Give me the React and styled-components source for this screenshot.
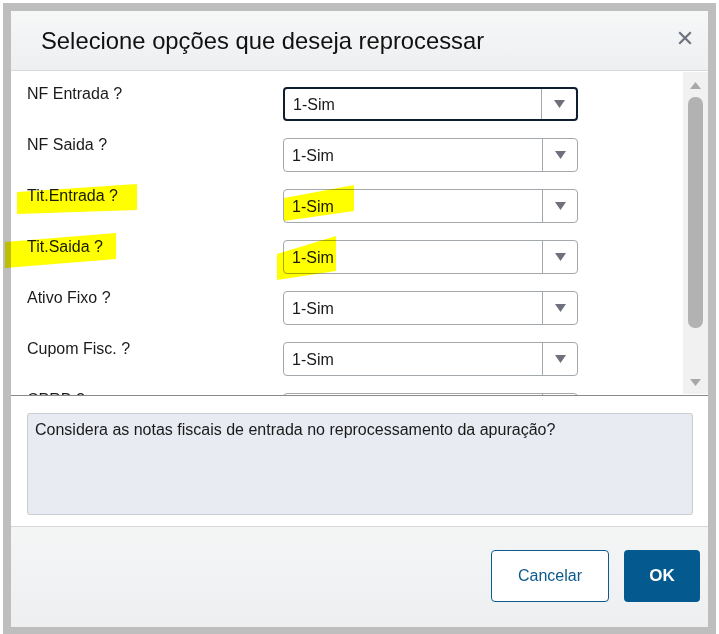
import React from "react";
import styled, { createGlobalStyle } from "styled-components";

const GlobalStyle = createGlobalStyle`
  html, body {
    margin: 0;
    padding: 0;
    background: #ffffff;
    overflow: hidden;
  }
  body {
    font-family: "Liberation Sans", Arial, sans-serif;
    color: #1a1a1a;
  }
`;

const options = [
  { label: "NF Entrada ?", value: "1-Sim", focused: true },
  { label: "NF Saida ?", value: "1-Sim" },
  {
    label: "Tit.Entrada ?",
    value: "1-Sim",
    labelMark: { left: -10, top: -2, w: 120, h: 30, pts: "0 8, 120 0, 120 26, 0 30" },
    valueMark: { left: 0, top: -5, w: 70, h: 36, pts: "0 13, 70 0, 70 26, 0 36" },
  },
  {
    label: "Tit.Saida ?",
    value: "1-Sim",
    labelMark: { left: -22, top: -4, w: 111, h: 35, pts: "0 9, 111 0, 111 26, 0 35" },
    valueMark: { left: -7, top: -5, w: 59, h: 44, pts: "0 18, 59 0, 59 35, 0 44" },
  },
  { label: "Ativo Fixo ?", value: "1-Sim" },
  { label: "Cupom Fisc. ?", value: "1-Sim" },
  { label: "CPRB ?", value: "1-Sim" },
];

// turns "x y, x y" into a clip-path polygon list in px
const toPolygon = (pts) =>
  pts
    .split(",")
    .map((pt) =>
      pt
        .trim()
        .split(" ")
        .map((n) => `${n}px`)
        .join(" ")
    )
    .join(", ");

export default function App() {
  return (
    <>
      <GlobalStyle />
      <Frame>
        <Dialog>
          <Header>
            <Title>Selecione opções que deseja reprocessar</Title>
            <CloseButton aria-label="Fechar">
              <svg width="14" height="14" viewBox="0 0 14 14">
                <path d="M2 2 L12 12 M12 2 L2 12" stroke="#6f737d" strokeWidth="2.2" strokeLinecap="square" />
              </svg>
            </CloseButton>
          </Header>

          <Body>
            <List>
              {options.map((opt) => (
                <Row key={opt.label}>
                  <Label>
                    {opt.labelMark && <Mark $m={opt.labelMark} />}
                    {opt.label}
                  </Label>
                  <Select $focused={opt.focused}>
                    {opt.valueMark && <Mark $m={opt.valueMark} />}
                    <Value>{opt.value}</Value>
                    <ArrowBox>
                      <svg width="11" height="8" viewBox="0 0 11 8">
                        <path d="M0 0 L11 0 L5.5 8 Z" fill="#6e717c" />
                      </svg>
                    </ArrowBox>
                  </Select>
                </Row>
              ))}
            </List>
            <ScrollTrack>
              <svg width="11" height="7" viewBox="0 0 11 7">
                <path d="M0 7 L11 7 L5.5 0 Z" fill="#a8a8a8" />
              </svg>
              <Thumb />
              <svg width="11" height="7" viewBox="0 0 11 7">
                <path d="M0 0 L11 0 L5.5 7 Z" fill="#a8a8a8" />
              </svg>
            </ScrollTrack>
          </Body>

          <Help>
            <HelpBox>Considera as notas fiscais de entrada no reprocessamento da apuração?</HelpBox>
          </Help>

          <Footer>
            <SecondaryButton>Cancelar</SecondaryButton>
            <PrimaryButton>OK</PrimaryButton>
          </Footer>
        </Dialog>
      </Frame>
    </>
  );
}

const Frame = styled.div`
  margin: 3px;
  width: 713px;
  border: 8px solid #bebebe;
  box-sizing: border-box;
`;

const Dialog = styled.div`
  display: flex;
  flex-direction: column;
  width: 697px;
  height: 616px;
  background: #ffffff;
`;

const Header = styled.div`
  display: flex;
  align-items: center;
  justify-content: space-between;
  height: 59px;
  padding: 0 12px 0 30px;
  background: linear-gradient(#f6f7f7, #eeeff1);
  border-bottom: 1px solid #d9d9d9;
  flex-shrink: 0;
`;

const Title = styled.h1`
  margin: 0;
  font-size: 23.8px;
  font-weight: normal;
  color: #111111;
`;

const CloseButton = styled.button`
  display: flex;
  align-items: center;
  justify-content: center;
  width: 22px;
  height: 22px;
  padding: 0;
  margin-top: -6px;
  border: none;
  background: transparent;
  cursor: pointer;
`;

const Body = styled.div`
  display: flex;
  height: 324px;
  border-bottom: 1px solid #8a8a8a;
  flex-shrink: 0;
`;

const List = styled.div`
  flex: 1;
  padding: 13px 0 0 16px;
  overflow-x: visible;
  overflow-y: clip;
`;

const Row = styled.div`
  display: grid;
  grid-template-columns: 256px 295px;
  align-items: start;
  height: 51px;
`;

const Label = styled.span`
  position: relative;
  font-size: 16px;
  line-height: 19px;
  color: #1a1a1a;
`;

const Mark = styled.span`
  position: absolute;
  left: ${(p) => p.$m.left}px;
  top: ${(p) => p.$m.top}px;
  width: ${(p) => p.$m.w}px;
  height: ${(p) => p.$m.h}px;
  background: #ffff00;
  clip-path: polygon(${(p) => toPolygon(p.$m.pts)});
  mix-blend-mode: multiply;
  pointer-events: none;
  z-index: 2;
`;

const Select = styled.div`
  position: relative;
  display: flex;
  margin-top: 3px;
  height: 34px;
  box-sizing: border-box;
  border: ${(p) => (p.$focused ? "2px solid #0e1e30" : "1px solid #a3a8ad")};
  border-radius: 4px;
  background: #ffffff;
`;

const Value = styled.div`
  flex: 1;
  display: flex;
  align-items: center;
  padding-left: 8px;
  padding-top: 1px;
  font-size: 16px;
  color: #1a1a1a;
`;

const ArrowBox = styled.div`
  display: flex;
  align-items: center;
  justify-content: center;
  width: 34px;
  border-left: 1px solid #a3a8ad;
`;

const ScrollTrack = styled.div`
  display: flex;
  flex-direction: column;
  align-items: center;
  justify-content: space-between;
  width: 25px;
  margin: 1px 0 1px;
  padding: 10px 4px 8px 4px;
  box-sizing: border-box;
  background: #f1f1f1;
  gap: 8px;
`;

const Thumb = styled.div`
  width: 15px;
  flex: 0 0 231px;
  margin-bottom: auto;
  border-radius: 7px;
  background: #b2b2b2;
`;

const Help = styled.div`
  padding: 17px 15px 11px 16px;
  border-bottom: 1px solid #d6d6d6;
  flex-shrink: 0;
`;

const HelpBox = styled.div`
  height: 102px;
  box-sizing: border-box;
  padding: 6px 7px;
  background: #e8ebf2;
  border: 1px solid #c9ccd1;
  border-radius: 3px;
  font-size: 16px;
  line-height: 19px;
  color: #1a1a1a;
`;

const Footer = styled.div`
  flex: 1;
  display: flex;
  justify-content: flex-end;
  align-items: flex-start;
  gap: 15px;
  padding: 23px 8px 0 0;
  background: linear-gradient(#f4f5f5, #eeeff1);
`;

const SecondaryButton = styled.button`
  width: 118px;
  height: 52px;
  border: 1px solid #0b5c8e;
  border-radius: 4px;
  background: #ffffff;
  color: #0d5a8c;
  font-family: "Liberation Sans", Arial, sans-serif;
  font-size: 16px;
  cursor: pointer;
`;

const PrimaryButton = styled.button`
  width: 76px;
  height: 52px;
  border: none;
  border-radius: 4px;
  background: #045a8f;
  color: #ffffff;
  font-family: "Liberation Sans", Arial, sans-serif;
  font-size: 17px;
  font-weight: bold;
  cursor: pointer;
`;
